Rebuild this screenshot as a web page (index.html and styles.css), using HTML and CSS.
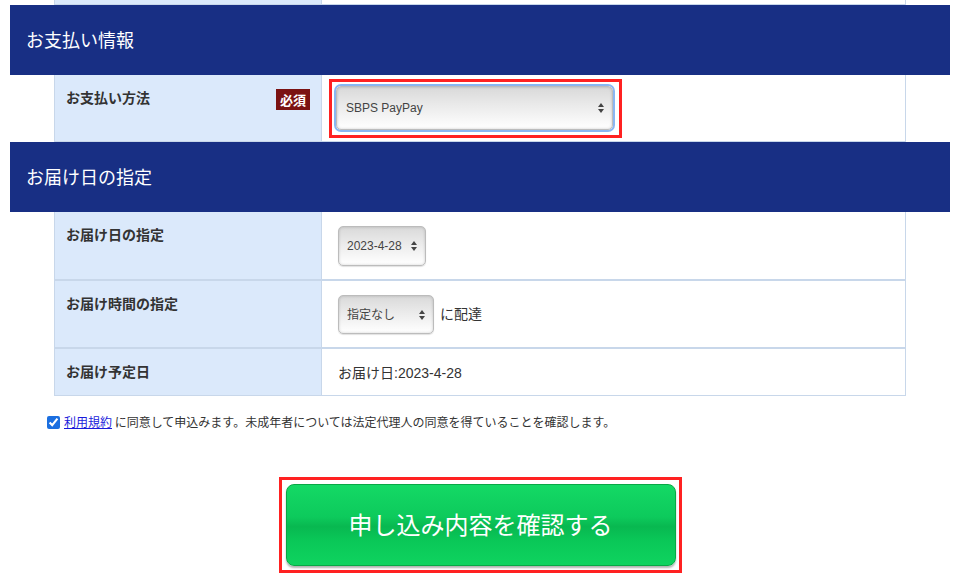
FILE: index.html
```html
<!DOCTYPE html>
<html lang="ja">
<head>
    <meta charset="UTF-8">
    <meta name="viewport" content="width=device-width, initial-scale=1.0">
    <title>ご注文手続き</title>
    <link rel="stylesheet" href="styles.css">
</head>
<body>
    <div class="page">
        <div class="table table-tail">
            <div class="row"><div class="th"></div><div class="td"></div></div>
        </div>

        <h2 class="sec-head">お支払い情報</h2>
        <div class="table">
            <div class="row row-pay">
                <div class="th"><span>お支払い方法</span><span class="req">必須</span></div>
                <div class="td">
                    <div class="hl hl-select">
                        <span class="sel focused">
                            <select class="sel-wide"><option>SBPS PayPay</option></select>
                        </span>
                    </div>
                </div>
            </div>
        </div>

        <h2 class="sec-head">お届け日の指定</h2>
        <div class="table">
            <div class="row">
                <div class="th"><span>お届け日の指定</span></div>
                <div class="td">
                    <span class="sel"><select class="sel-date"><option>2023-4-28</option></select></span>
                </div>
            </div>
            <div class="row">
                <div class="th"><span>お届け時間の指定</span></div>
                <div class="td">
                    <span class="sel"><select class="sel-time"><option>指定なし</option></select></span>
                    <span class="after">に配達</span>
                </div>
            </div>
            <div class="row row-last">
                <div class="th"><span>お届け予定日</span></div>
                <div class="td"><span class="plain">お届け日:2023-4-28</span></div>
            </div>
        </div>

        <p class="agree">
            <input type="checkbox" id="agree" checked>
            <label for="agree"><a href="#">利用規約</a> に同意して申込みます。未成年者については法定代理人の同意を得ていることを確認します。</label>
        </p>

        <div class="submit-area">
            <div class="hl hl-button">
                <button class="submit" type="button">申し込み内容を確認する</button>
            </div>
        </div>
    </div>
</body>
</html>
```

FILE: styles.css
```css
* {
    box-sizing: border-box;
}
body {
    font-family: "Liberation Sans", "Noto Sans CJK JP", sans-serif;
    color: #333;
    background: #fff;
    margin: 0;
}
.page {
    padding: 0 10px;
}
.table {
    margin: 0 44px;
    border-left: 1px solid #c8d7ea;
    border-right: 1px solid #c8d7ea;
}
.row {
    display: flex;
    border-bottom: 2px solid #c8d7ea;
}
.row-pay {
    border-bottom-width: 1px;
}
.row-last {
    border-bottom-width: 1px;
}
.th {
    width: 267px;
    flex-shrink: 0;
    background: #dbe9fb;
    border-right: 1px solid #c8d7ea;
    padding: 12px 11px 14px 11px;
    display: flex;
    align-items: flex-start;
    justify-content: space-between;
    font-family: "Noto Sans CJK JP", sans-serif;
    font-size: 14px;
    font-weight: bold;
    line-height: 20px;
    color: #333;
}
.td {
    flex: 1;
    padding: 14px 16px 13px;
    display: flex;
    align-items: center;
}
.table-tail .row {
    height: 5px;
    border-bottom-width: 1px;
}
.table-tail .th,
.table-tail .td {
    padding: 0;
}
.row-pay .td {
    padding: 4px 7px 3px;
}
.req {
    background: #7b1212;
    color: #fff;
    font-size: 13px;
    line-height: 21px;
    padding: 0 4px;
    margin-top: 2px;
}
.sec-head {
    margin: 0;
    height: 70px;
    background: #182f84;
    color: #fff;
    display: flex;
    align-items: center;
    padding: 0 0 3px 16px;
    font-family: "Noto Sans CJK JP", sans-serif;
    font-size: 18px;
    font-weight: normal;
}
.hl {
    border: 3px solid #ff2121;
}
.hl-select {
    padding: 4px 6px 5px 4px;
}
.sel {
    position: relative;
    display: inline-block;
}
.sel select {
    -webkit-appearance: none;
    appearance: none;
    height: 40px;
    border: 1px solid #bcbcbc;
    border-radius: 5px;
    background: linear-gradient(#d9d9d9, #e9e9e9 40%, #f8f8f8 80%, #ffffff);
    box-shadow: inset 0 0 3px rgba(0, 0, 0, 0.18), 0 1px 1px rgba(0, 0, 0, 0.12);
    padding: 0 16px 0 8px;
    font-family: "Liberation Sans", "Noto Sans CJK JP", sans-serif;
    font-size: 12px;
    color: #444;
    outline: none;
    display: block;
}
.sel::before,
.sel::after {
    content: "";
    position: absolute;
    right: 9px;
    border-left: 3px solid transparent;
    border-right: 3px solid transparent;
}
.sel::before {
    top: 50%;
    margin-top: -5px;
    border-bottom: 4px solid #444;
}
.sel::after {
    top: 50%;
    margin-top: 1px;
    border-top: 4px solid #444;
}
.sel-wide {
    width: 277px;
    padding-left: 9px !important;
}
.sel.focused select {
    height: 44px;
    box-shadow: 0 0 0 2px #8ab6f2, inset 0 0 3px rgba(0, 0, 0, 0.2);
}
.sel-date {
    width: 88px;
}
.sel-time {
    width: 96px;
    height: 39px !important;
}
.after {
    margin-left: 6px;
    font-size: 14px;
    margin-top: -4px;
}
.plain {
    font-size: 14px;
    line-height: 18px;
    margin-top: 0;
}
.agree {
    margin: 17px 0 0 37px;
    font-size: 12px;
    line-height: 18px;
    display: flex;
    align-items: center;
    font-family: "Noto Sans CJK JP", sans-serif;
}
.agree input {
    margin: 0 4px 0 0;
    width: 13px;
    height: 13px;
    accent-color: #1b6fe0;
}
.agree a {
    color: #1a1adb;
}
.submit-area {
    display: flex;
    justify-content: center;
    margin-top: 46px;
}
.hl-button {
    padding: 4px 3px 4px 4px;
}
.submit {
    width: 390px;
    height: 82px;
    padding: 0 0 3px;
    border: 1px solid #08a845;
    border-radius: 8px;
    background: linear-gradient(#14d965 0%, #0dca5c 40%, #08b850 52%, #0ac858 70%, #0fd35f 100%);
    box-shadow: 0 2px 2px rgba(0, 0, 0, 0.3);
    color: #fff;
    font-family: "Noto Sans CJK JP", sans-serif;
    font-size: 24px;
    cursor: pointer;
    display: block;
}
```
